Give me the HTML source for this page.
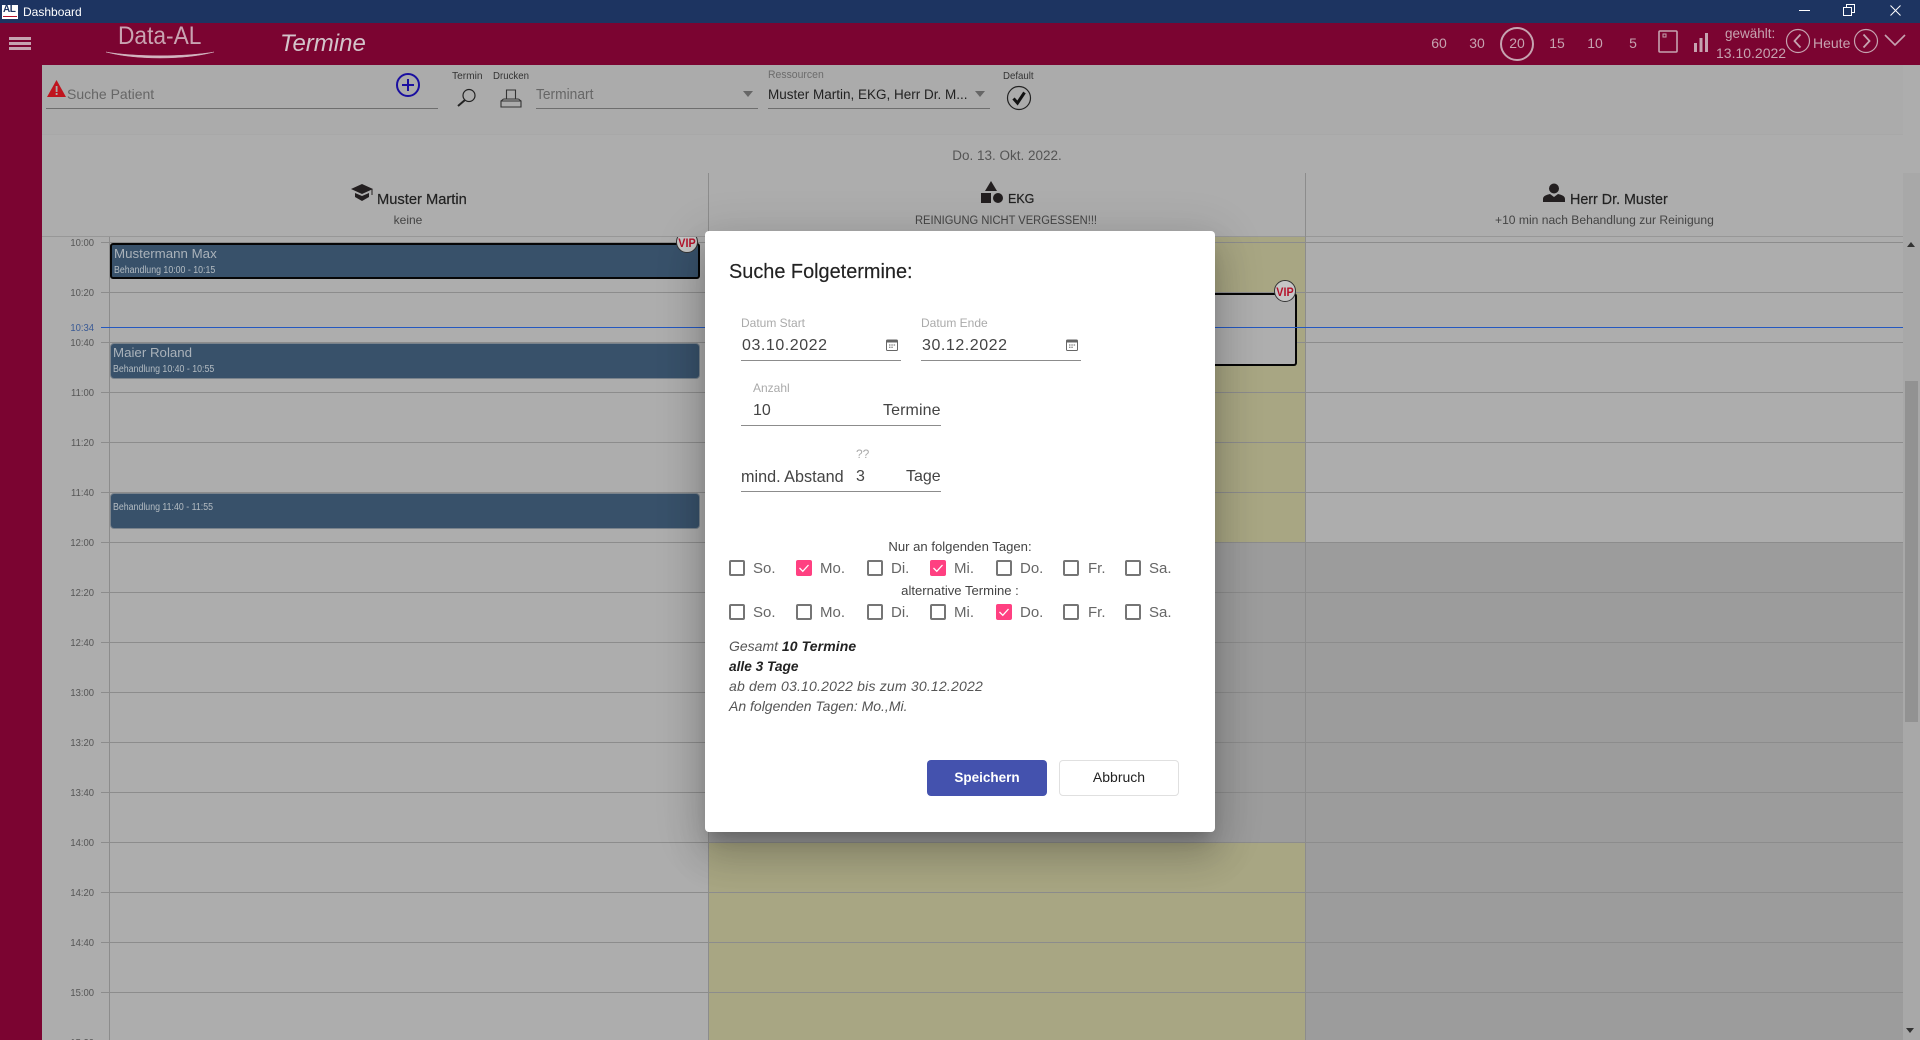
<!DOCTYPE html>
<html lang="de"><head><meta charset="utf-8"><title>Dashboard</title>
<style>
html,body{margin:0;padding:0;width:1920px;height:1040px;overflow:hidden;background:#adadad;font-family:"Liberation Sans",sans-serif}
#r{position:relative;width:1920px;height:1040px;overflow:hidden}
.a{position:absolute}
.t{position:absolute;white-space:nowrap;line-height:1}
.c{transform:translateX(-50%)}
.tm{position:absolute;left:54px;width:40px;text-align:right;font-size:10.5px;line-height:1;color:#555;transform:scaleX(.9);transform-origin:100% 0}
.n{position:absolute;font-size:14px;line-height:1;color:#c6a3b0;top:36px;transform:translateX(-50%);white-space:nowrap}
.ev{position:absolute;left:111px;width:588px;height:34px;background:#38516a;border-radius:3px;box-sizing:border-box;box-shadow:0 0 0 1px #7a838c}
.sx{transform:scaleX(.88);transform-origin:0 0}
.cb{position:absolute;width:16px;height:16px;box-sizing:border-box;border:2px solid #757575;border-radius:2px}
.cb.on{background:#ff4081;border:0}
.cb svg{display:block}
.l{position:absolute;white-space:nowrap;line-height:1;font-size:15px;color:#666}
.ul{position:absolute;height:1px;background:#8c8c8c}
.fl{position:absolute;white-space:nowrap;line-height:1;font-size:12px;color:#aaa}
.v{position:absolute;white-space:nowrap;line-height:1;font-size:16px;color:#444}
.vip{position:absolute;width:22px;height:22px;box-sizing:border-box;border-radius:50%;background:#c6c6c6;border:1px solid #333}
.vt{position:absolute;white-space:nowrap;line-height:1;font-size:12px;font-weight:bold;color:#b5122b;transform:translateX(-50%) scaleX(.9)}
</style></head><body><div id="r">

<!-- columns -->
<div class="a" style="left:42px;top:65px;width:1878px;height:975px;background:#adadad"></div>
<div class="a" style="left:708px;top:237px;width:598px;height:305px;background:#a8a683"></div>
<div class="a" style="left:708px;top:542px;width:598px;height:300px;background:#9c9c9c"></div>
<div class="a" style="left:708px;top:842px;width:598px;height:198px;background:#a8a683"></div>
<div class="a" style="left:1306px;top:542px;width:597px;height:498px;background:#9c9c9c"></div>

<!-- grid lines -->
<div class="a" style="left:101px;top:242px;width:1802px;height:798px;background:repeating-linear-gradient(to bottom,#8c8c8c 0,#8c8c8c 1px,transparent 1px,transparent 50px)"></div>
<div class="a" style="left:109px;top:173px;width:1px;height:867px;background:#8c8c8c"></div>
<div class="a" style="left:708px;top:173px;width:1px;height:867px;background:#8c8c8c"></div>
<div class="a" style="left:1305px;top:173px;width:1px;height:867px;background:#8c8c8c"></div>

<!-- time labels -->
<div class="tm" style="top:238px">10:00</div>
<div class="tm" style="top:288px">10:20</div>
<div class="tm" style="top:323px;color:#3a5a95">10:34</div>
<div class="tm" style="top:338px">10:40</div>
<div class="tm" style="top:388px">11:00</div>
<div class="tm" style="top:438px">11:20</div>
<div class="tm" style="top:488px">11:40</div>
<div class="tm" style="top:538px">12:00</div>
<div class="tm" style="top:588px">12:20</div>
<div class="tm" style="top:638px">12:40</div>
<div class="tm" style="top:688px">13:00</div>
<div class="tm" style="top:738px">13:20</div>
<div class="tm" style="top:788px">13:40</div>
<div class="tm" style="top:838px">14:00</div>
<div class="tm" style="top:888px">14:20</div>
<div class="tm" style="top:938px">14:40</div>
<div class="tm" style="top:988px">15:00</div>
<div class="tm" style="top:1038px">15:20</div>

<!-- events -->
<div class="ev" style="top:243px;height:36px;left:110px;width:590px;border:2px solid #060606;box-shadow:none"></div>
<div class="t" style="left:114px;top:247px;font-size:13.3px;color:#aab2ba">Mustermann Max</div>
<div class="t sx" style="left:114px;top:265.500px;font-size:10px;color:#b4bcc2">Behandlung 10:00 - 10:15</div>
<div class="ev" style="top:344px"></div>
<div class="t" style="left:113px;top:346px;font-size:13.3px;color:#aab2ba">Maier Roland</div>
<div class="t sx" style="left:113px;top:365px;font-size:10px;color:#b4bcc2">Behandlung 10:40 - 10:55</div>
<div class="ev" style="top:494px"></div>
<div class="t sx" style="left:113px;top:502.500px;font-size:10px;color:#b4bcc2">Behandlung 11:40 - 11:55</div>

<!-- second-column event -->
<div class="a" style="left:1100px;top:293px;width:197px;height:73px;box-sizing:border-box;background:#aeaeae;border:2px solid #060606;border-left:0;border-radius:0 3px 3px 0"></div>

<!-- current time line -->
<div class="a" style="left:101px;top:327px;width:1802px;height:1px;background:#2458c0"></div>

<!-- VIP badges -->
<div class="vip" style="left:676px;top:231px"></div>
<div class="vt" style="left:687px;top:237px">VIP</div>
<div class="vip" style="left:1274px;top:280px"></div>
<div class="vt" style="left:1285px;top:286px">VIP</div>

<!-- column header -->
<div class="a" style="left:42px;top:65px;width:1861px;height:172px;background:#adadad;border-bottom:1px solid #979797;box-sizing:border-box"></div>
<div class="a" style="left:42px;top:65px;width:1861px;height:70px;background:#ababab;border-bottom:1px solid #a8a8a8;box-sizing:border-box"></div>
<div class="a" style="left:708px;top:173px;width:1px;height:64px;background:#8c8c8c"></div>
<div class="a" style="left:1305px;top:173px;width:1px;height:64px;background:#8c8c8c"></div>

<div class="t c" style="left:1007px;top:149px;font-size:13.5px;color:#555">Do. 13. Okt. 2022.</div>

<svg class="a" style="left:350px;top:183px" width="24" height="20" viewBox="0 0 24 20"><path fill="#231f20" d="M12 1 23 6 12 11 1 6z"/><path fill="#231f20" d="M5 10l7 3 7-3v4l-7 4-7-4z"/><path stroke="#231f20" fill="none" d="M22 6v6"/></svg>
<div class="t" style="left:377px;top:193px;font-size:14.700px;color:#222;-webkit-text-stroke:.2px #222">Muster Martin</div>
<div class="t c" style="left:408px;top:213.500px;font-size:12px;color:#444">keine</div>

<svg class="a" style="left:980px;top:180px" width="24" height="24" viewBox="0 0 24 24"><path fill="#231f20" d="M11 1l6 10H5z"/><rect x="1" y="13" width="10" height="10" fill="#231f20"/><circle cx="18" cy="18" r="5" fill="#231f20"/></svg>
<div class="t" style="left:1008px;top:193px;font-size:12.500px;color:#222;-webkit-text-stroke:.2px #222">EKG</div>
<div class="t" style="left:915px;top:215.500px;font-size:11.5px;color:#444;transform:scaleX(.97);transform-origin:0 0">REINIGUNG NICHT VERGESSEN!!!</div>

<svg class="a" style="left:1543px;top:183px" width="22" height="20" viewBox="0 0 22 20"><circle cx="11" cy="5.5" r="5" fill="#231f20"/><path fill="#231f20" d="M0 19v-3c0-3 3-4 7-5l4 3 4-3c4 1 7 2 7 5v3z"/></svg>
<div class="t" style="left:1570px;top:193px;font-size:14.300px;color:#222;-webkit-text-stroke:.2px #222">Herr Dr. Muster</div>
<div class="t" style="left:1495px;top:214px;font-size:12.100px;color:#444">+10 min nach Behandlung zur Reinigung</div>

<!-- scrollbar -->
<div class="a" style="left:1903px;top:173px;width:17px;height:867px;background:#a8a8a8"></div>
<div class="a" style="left:1905px;top:381px;width:13px;height:341px;background:#929292"></div>
<svg class="a" style="left:1906px;top:241px" width="10" height="8"><path d="M5 1 9 6H1z" fill="#333"/></svg>
<svg class="a" style="left:1906px;top:1027px" width="10" height="8"><path d="M0 1h8l-4 5z" fill="#333"/></svg>

<!-- toolbar -->
<svg class="a" style="left:47px;top:80px" width="19" height="17" viewBox="0 0 19 17"><path fill="#c0141e" d="M9.5 0 19 17H0z"/><rect x="8.7" y="6" width="1.8" height="6" fill="#ababab"/><rect x="8.7" y="13" width="1.8" height="2" fill="#ababab"/></svg>
<div class="t" style="left:67px;top:87px;font-size:14px;color:#666">Suche Patient</div>
<div class="a" style="left:46px;top:108px;width:392px;height:1px;background:#6e6e6e"></div>
<svg class="a" style="left:395px;top:72px" width="26" height="26" viewBox="0 0 26 26"><circle cx="13" cy="13" r="11" fill="none" stroke="#1a0fa0" stroke-width="2"/><path d="M13 7v12M7 13h12" stroke="#1a0fa0" stroke-width="2"/></svg>
<div class="t" style="left:452px;top:71px;font-size:10.5px;color:#333;transform:scaleX(.97);transform-origin:0 0">Termin</div>
<div class="t" style="left:493px;top:71px;font-size:10.5px;color:#333;transform:scaleX(.92);transform-origin:0 0">Drucken</div>
<svg class="a" style="left:456px;top:88px" width="21" height="19" viewBox="0 0 21 19"><circle cx="13" cy="7.5" r="6" fill="none" stroke="#222" stroke-width="1.2"/><path d="M9 12 2 18" stroke="#222" stroke-width="2"/></svg>
<svg class="a" style="left:500px;top:89px" width="22" height="19" viewBox="0 0 22 19"><path d="M6.5 1h9v9h-9zM3.5 10h15M1 12h20v6H1zM1 12l2.5-2M21 12l-2.500-2" fill="none" stroke="#333" stroke-width="1.1"/></svg>
<div class="t" style="left:536px;top:88px;font-size:14.5px;color:#666;transform:scaleX(.95);transform-origin:0 0">Terminart</div>
<div class="a" style="left:536px;top:108px;width:222px;height:1px;background:#6e6e6e"></div>
<svg class="a" style="left:743px;top:91px" width="11" height="6"><path d="M0 0h10L5 6z" fill="#666"/></svg>
<div class="t" style="left:768px;top:69.500px;font-size:11px;color:#6c6c6c;transform:scaleX(.95);transform-origin:0 0">Ressourcen</div>
<div class="t" style="left:768px;top:88px;font-size:13.5px;color:#222">Muster Martin, EKG, Herr Dr. M...</div>
<svg class="a" style="left:975px;top:91px" width="11" height="6"><path d="M0 0h10L5 6z" fill="#666"/></svg>
<div class="a" style="left:768px;top:108px;width:222px;height:1px;background:#6e6e6e"></div>
<div class="t" style="left:1003px;top:71px;font-size:10.5px;color:#333;transform:scaleX(.92);transform-origin:0 0">Default</div>
<svg class="a" style="left:1006px;top:85px" width="26" height="26" viewBox="0 0 26 26"><circle cx="13" cy="13" r="11.500" fill="none" stroke="#222" stroke-width="1.200"/><path d="M7.500 13.500 11.500 18 18.500 7.500" fill="none" stroke="#111" stroke-width="3"/></svg>

<!-- sidebar + header -->
<div class="a" style="left:0;top:65px;width:42px;height:975px;background:#7b0431"></div>
<div class="a" style="left:0;top:23px;width:1920px;height:42px;background:#7b0431"></div>
<div class="a" style="left:0;top:0;width:1920px;height:23px;background:#1d3461"></div>

<!-- title bar -->
<div class="a" style="left:2px;top:5px;width:16px;height:14px;background:#fff"></div>
<div class="t" style="left:3px;top:5px;font-size:10px;font-weight:bold;color:#1d3461;letter-spacing:-.5px">AL</div>
<div class="a" style="left:3px;top:16px;width:14px;height:1px;background:#b5122b"></div>
<div class="t" style="left:23px;top:6px;font-size:12px;color:#fff">Dashboard</div>
<div class="a" style="left:1799px;top:10px;width:11px;height:1px;background:#fff"></div>
<svg class="a" style="left:1843px;top:4px" width="12" height="12"><path d="M.5 3.500h8v8h-8zM3.500 3.500v-3h8v8h-3" fill="none" stroke="#fff"/></svg>
<svg class="a" style="left:1890px;top:5px" width="11" height="11"><path d="M.5.500l10 10M10.500.500l-10 10" stroke="#fff" stroke-width="1"/></svg>

<!-- header left -->
<div class="a" style="left:9px;top:37px;width:22px;height:3px;background:#c6a3b0"></div>
<div class="a" style="left:9px;top:42px;width:22px;height:3px;background:#c6a3b0"></div>
<div class="a" style="left:9px;top:47px;width:22px;height:3px;background:#c6a3b0"></div>
<div class="t" style="left:118px;top:24px;font-size:25px;color:#c9a3b1;transform:scaleX(.91);transform-origin:0 0">Data-AL</div>
<svg class="a" style="left:105px;top:51px" width="110" height="10" viewBox="0 0 110 10"><path d="M1 1C30 9 80 9 109 1 80 6 30 6 1 1z" fill="#d3b5c0" stroke="#d3b5c0" stroke-width=".5"/></svg>
<div class="t" style="left:280px;top:32px;font-size:24px;font-style:italic;color:#d3c4ca">Termine</div>

<!-- header right -->
<div class="n" style="left:1439px">60</div>
<div class="n" style="left:1477px">30</div>
<div class="a" style="left:1500px;top:27px;width:34px;height:34px;box-sizing:border-box;border:2px solid #c6a3b0;border-radius:50%"></div>
<div class="n" style="left:1517px">20</div>
<div class="n" style="left:1557px">15</div>
<div class="n" style="left:1595px">10</div>
<div class="n" style="left:1633px">5</div>
<svg class="a" style="left:1658px;top:30px" width="20" height="23"><rect x="1" y="1" width="18" height="21" rx="1" fill="none" stroke="#c6a3b0" stroke-width="1.600"/><rect x="5" y="4" width="3" height="3" fill="none" stroke="#c6a3b0"/></svg>
<svg class="a" style="left:1694px;top:33px" width="14" height="20"><rect x="0" y="10" width="3" height="9" fill="#c6a3b0"/><rect x="5.500" y="5" width="3" height="14" fill="#c6a3b0"/><rect x="11" y="0" width="3" height="19" fill="#c6a3b0"/></svg>
<div class="t" style="left:1725px;top:27px;font-size:13.500px;color:#c6a3b0">gewählt:</div>
<div class="t" style="left:1716px;top:46px;font-size:14px;color:#c6a3b0">13.10.2022</div>
<svg class="a" style="left:1785px;top:28px" width="26" height="26"><circle cx="13" cy="13" r="11.500" fill="none" stroke="#c6a3b0" stroke-width="1.200"/><path d="M15.500 6.500 9.500 13l6 6.500" fill="none" stroke="#c6a3b0" stroke-width="1.800"/></svg>
<div class="t" style="left:1813px;top:36px;font-size:14px;color:#c6a3b0">Heute</div>
<svg class="a" style="left:1853px;top:28px" width="26" height="26"><circle cx="13" cy="13" r="11.500" fill="none" stroke="#c6a3b0" stroke-width="1.200"/><path d="M10.500 6.500l6 6.500-6 6.500" fill="none" stroke="#c6a3b0" stroke-width="1.800"/></svg>
<svg class="a" style="left:1884px;top:34px" width="22" height="13"><path d="M1 1l10 10L21 1" fill="none" stroke="#c6a3b0" stroke-width="1.600"/></svg>

<!-- dialog -->
<div class="a" style="left:705px;top:231px;width:510px;height:601px;background:#fff;border-radius:4px;box-shadow:0 11px 15px -7px rgba(0,0,0,.2),0 24px 38px 3px rgba(0,0,0,.14),0 9px 46px 8px rgba(0,0,0,.12)"></div>

<div class="t" style="left:729px;top:263px;font-size:19.900px;color:#222;-webkit-text-stroke:.15px #222">Suche Folgetermine:</div>

<div class="fl" style="left:741px;top:316.500px">Datum Start</div>
<div class="v" style="left:742px;top:337.500px;letter-spacing:.55px">03.10.2022</div>
<svg class="a" style="left:886px;top:339px" width="12" height="12" viewBox="0 0 12 12"><rect x=".5" y="1" width="11" height="10.500" rx="1" fill="none" stroke="#666"/><rect x=".5" y="1" width="11" height="2.500" fill="#666"/><path d="M3 6h1.500M5.300 6h1.500M7.600 6h1.500M3 8.300h1.500M5.300 8.300h1.500" stroke="#666"/></svg>
<div class="ul" style="left:741px;top:360px;width:160px"></div>

<div class="fl" style="left:921px;top:316.500px">Datum Ende</div>
<div class="v" style="left:922px;top:337.500px;letter-spacing:.55px">30.12.2022</div>
<svg class="a" style="left:1066px;top:339px" width="12" height="12" viewBox="0 0 12 12"><rect x=".5" y="1" width="11" height="10.500" rx="1" fill="none" stroke="#666"/><rect x=".5" y="1" width="11" height="2.500" fill="#666"/><path d="M3 6h1.500M5.300 6h1.500M7.600 6h1.500M3 8.300h1.500M5.300 8.300h1.500" stroke="#666"/></svg>
<div class="ul" style="left:921px;top:360px;width:160px"></div>

<div class="fl" style="left:753px;top:382px">Anzahl</div>
<div class="v" style="left:753px;top:402.500px">10</div>
<div class="v" style="left:883px;top:402.500px;letter-spacing:.1px">Termine</div>
<div class="ul" style="left:741px;top:425px;width:200px"></div>

<div class="fl" style="left:856px;top:448px">??</div>
<div class="v" style="left:741px;top:468.500px;font-size:16.200px">mind. Abstand</div>
<div class="v" style="left:856px;top:468.500px">3</div>
<div class="v" style="left:906px;top:468.500px">Tage</div>
<div class="ul" style="left:741px;top:491px;width:200px"></div>

<div class="t c" style="left:960px;top:540px;font-size:13.100px;color:#444">Nur an folgenden Tagen:</div>

<div class="cb" style="left:729px;top:560px"></div><div class="l" style="left:753px;top:560.500px">So.</div>
<div class="cb on" style="left:796px;top:560px"><svg width="16" height="16"><path d="M3.500 8 6.800 11.300 12.500 5" fill="none" stroke="#fff" stroke-width="1.300"/></svg></div><div class="l" style="left:820px;top:560.500px">Mo.</div>
<div class="cb" style="left:867px;top:560px"></div><div class="l" style="left:891px;top:560.500px">Di.</div>
<div class="cb on" style="left:930px;top:560px"><svg width="16" height="16"><path d="M3.500 8 6.800 11.300 12.500 5" fill="none" stroke="#fff" stroke-width="1.300"/></svg></div><div class="l" style="left:954px;top:560.500px">Mi.</div>
<div class="cb" style="left:996px;top:560px"></div><div class="l" style="left:1020px;top:560.500px">Do.</div>
<div class="cb" style="left:1063px;top:560px"></div><div class="l" style="left:1088px;top:560.500px">Fr.</div>
<div class="cb" style="left:1125px;top:560px"></div><div class="l" style="left:1149px;top:560.500px">Sa.</div>

<div class="t c" style="left:960px;top:584px;font-size:13.100px;color:#444">alternative Termine :</div>

<div class="cb" style="left:729px;top:604px"></div><div class="l" style="left:753px;top:604.500px">So.</div>
<div class="cb" style="left:796px;top:604px"></div><div class="l" style="left:820px;top:604.500px">Mo.</div>
<div class="cb" style="left:867px;top:604px"></div><div class="l" style="left:891px;top:604.500px">Di.</div>
<div class="cb" style="left:930px;top:604px"></div><div class="l" style="left:954px;top:604.500px">Mi.</div>
<div class="cb on" style="left:996px;top:604px"><svg width="16" height="16"><path d="M3.500 8 6.800 11.300 12.500 5" fill="none" stroke="#fff" stroke-width="1.300"/></svg></div><div class="l" style="left:1020px;top:604.500px">Do.</div>
<div class="cb" style="left:1063px;top:604px"></div><div class="l" style="left:1088px;top:604.500px">Fr.</div>
<div class="cb" style="left:1125px;top:604px"></div><div class="l" style="left:1149px;top:604.500px">Sa.</div>

<div class="t" style="left:729px;top:639px;font-size:14px;font-style:italic;color:#555">Gesamt <b style="color:#222;letter-spacing:.1px">10 Termine</b></div>
<div class="t" style="left:729px;top:660px;font-size:13.700px;font-style:italic;font-weight:bold;color:#222">alle 3 Tage</div>
<div class="t" style="left:729px;top:679px;font-size:14px;font-style:italic;color:#555;letter-spacing:.2px">ab dem 03.10.2022 bis zum 30.12.2022</div>
<div class="t" style="left:729px;top:699px;font-size:14px;font-style:italic;color:#555">An folgenden Tagen: Mo.,Mi.</div>

<div class="a" style="left:927px;top:760px;width:120px;height:36px;background:#4452ae;border-radius:4px;color:#fff;font-size:13.500px;font-weight:bold;line-height:35px;text-align:center">Speichern</div>
<div class="a" style="left:1059px;top:760px;width:120px;height:36px;box-sizing:border-box;background:#fff;border:1px solid #e0e0e0;border-radius:4px;color:#222;font-size:14px;line-height:32px;text-align:center">Abbruch</div>

</div></body></html>
